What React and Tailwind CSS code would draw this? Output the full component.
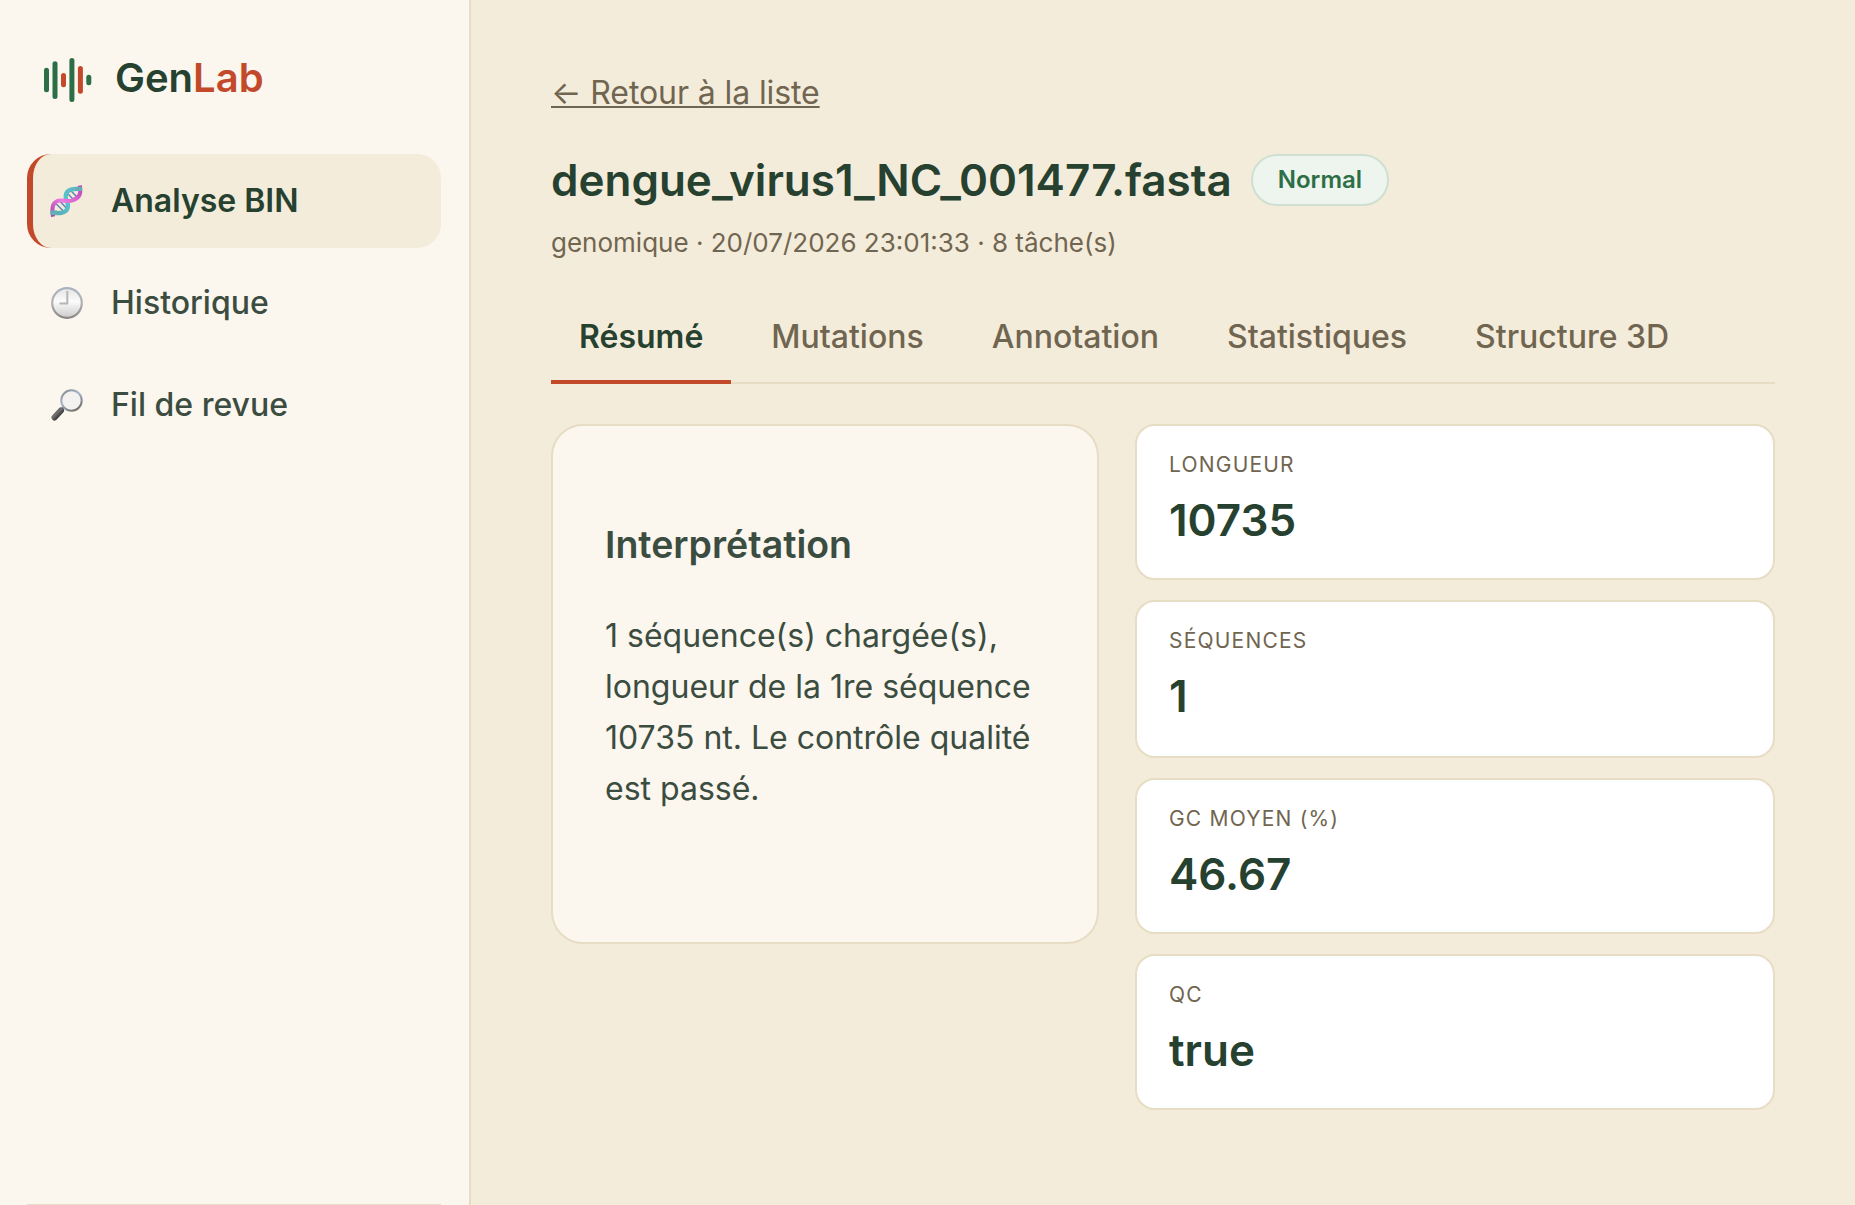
import React, { useState } from 'react';
import clsx from 'clsx';

const BARS = [
  { x: 0, y: 9.7, h: 24.6, color: '#2d6e46' },
  { x: 8.5, y: 3.3, h: 37.7, color: '#2d6e46' },
  { x: 17, y: 15, h: 14.3, color: '#c24a2b' },
  { x: 25.4, y: 0, h: 44, color: '#2d6e46' },
  { x: 33.9, y: 8, h: 27.7, color: '#c24a2b' },
  { x: 42.3, y: 16.7, h: 10.5, color: '#2d6e46' },
];

const TABS = ['Résumé', 'Mutations', 'Annotation', 'Statistiques', 'Structure 3D'];

const STATS = [
  { label: 'Longueur', value: '10735' },
  { label: 'Séquences', value: '1' },
  { label: 'GC moyen (%)', value: '46.67' },
  { label: 'QC', value: 'true' },
];

function Logo() {
  return (
    <svg width="48" height="44" viewBox="0 0 48 44">
      {BARS.map((b) => (
        <rect key={b.x} x={b.x} y={b.y} width="5" height={b.h} rx="2.5" fill={b.color} />
      ))}
    </svg>
  );
}

function DnaIcon() {
  return (
    <svg width="33" height="32" viewBox="0 0 34 32" fill="none" className="-ml-px">
      <defs>
        <linearGradient id="dnaPink" x1="0" y1="32" x2="32" y2="0" gradientUnits="userSpaceOnUse">
          <stop offset="0" stopColor="#a83fa6" />
          <stop offset="0.45" stopColor="#ee7be0" />
          <stop offset="1" stopColor="#b743b8" />
        </linearGradient>
        <linearGradient id="dnaBlue" x1="0" y1="32" x2="32" y2="0" gradientUnits="userSpaceOnUse">
          <stop offset="0" stopColor="#5ea5ad" />
          <stop offset="0.5" stopColor="#54c3cf" />
          <stop offset="1" stopColor="#64b6bd" />
        </linearGradient>
      </defs>
      <path d="M6 18.500l8 8M9.500 15.500l7 7.500M18 8l7.500 8M21.500 5.500l6.500 6.500" stroke="#5f83b8" strokeWidth="1.500" />
      <path d="M1.500 28C9 29 18 29 18.500 21.500C18.800 17 15.700 15 16.200 10.500C17 3 24 3.500 32.500 3.500" stroke="url(#dnaBlue)" strokeWidth="4.400" />
      <path d="M3.200 32C1.500 23 2.500 16.200 10.500 15.500C16 15.200 19 17.500 24 15C31 12.500 32 8 30.800 0" stroke="url(#dnaPink)" strokeWidth="4.200" />
      <path d="M0.500 28h7M26 3.500h7" stroke="#62b0b6" strokeWidth="4.600" />
    </svg>
  );
}

function ClockIcon() {
  return (
    <svg width="32" height="32" viewBox="0 0 32 32" fill="none">
      <defs>
        <linearGradient id="clockFace" x1="16" y1="2" x2="16" y2="30" gradientUnits="userSpaceOnUse">
          <stop offset="0" stopColor="#e6e6e6" />
          <stop offset="0.45" stopColor="#fbfbfb" />
          <stop offset="1" stopColor="#cfcdcc" />
        </linearGradient>
        <linearGradient id="clockRim" x1="16" y1="0" x2="16" y2="32" gradientUnits="userSpaceOnUse">
          <stop offset="0" stopColor="#a9b2bf" />
          <stop offset="0.5" stopColor="#b3b3b5" />
          <stop offset="1" stopColor="#858282" />
        </linearGradient>
      </defs>
      <circle cx="16" cy="16" r="14.800" fill="url(#clockFace)" stroke="url(#clockRim)" strokeWidth="2.200" />
      <path d="M16.300 4V16.500H8.500" stroke="#b8b5b3" strokeWidth="2" />
    </svg>
  );
}

function LoupeIcon() {
  return (
    <svg width="32" height="32" viewBox="0 0 32 32" fill="none">
      <defs>
        <linearGradient id="loupeRim" x1="12" y1="0" x2="26" y2="22" gradientUnits="userSpaceOnUse">
          <stop offset="0" stopColor="#85888d" />
          <stop offset="0.45" stopColor="#a5b6ca" />
          <stop offset="1" stopColor="#6f6b66" />
        </linearGradient>
        <linearGradient id="loupeHandle" x1="3" y1="22" x2="9" y2="28" gradientUnits="userSpaceOnUse">
          <stop offset="0" stopColor="#3c3c3c" />
          <stop offset="0.4" stopColor="#747474" />
          <stop offset="1" stopColor="#2a2a2a" />
        </linearGradient>
      </defs>
      <path d="M10.500 20.500L13.500 17.500" stroke="#8a8680" strokeWidth="2.500" />
      <path d="M3.500 28.500L10 21.500" stroke="url(#loupeHandle)" strokeWidth="6" strokeLinecap="round" />
      <circle cx="20.500" cy="11.500" r="10.200" fill="#f4f2f1" stroke="url(#loupeRim)" strokeWidth="2" />
    </svg>
  );
}

const NAV = [
  { label: 'Analyse BIN', Icon: DnaIcon },
  { label: 'Historique', Icon: ClockIcon },
  { label: 'Fil de revue', Icon: LoupeIcon },
];

function Sidebar() {
  const [page, setPage] = useState('Analyse BIN');

  return (
    <aside className="flex w-[471px] shrink-0 flex-col border-r-2 border-[#e7dcc4] bg-[#fbf6ee] pr-7 pl-[27px]">
      <div className="flex h-[154px] items-center gap-[23px] pt-1.5 pl-[17px]">
        <Logo />
        <span className="-mt-[5px] text-[40px] font-semibold text-[#26412f]">
          Gen<span className="text-[#c24a2b]">Lab</span>
        </span>
      </div>
      <nav className="flex flex-col gap-2">
        {NAV.map(({ label, Icon }) => (
          <button
            key={label}
            onClick={() => setPage(label)}
            className={clsx(
              'flex h-[94px] items-center gap-7 rounded-3xl border-l-[6px] pl-[18px] text-[32px]',
              page === label
                ? 'border-[#c24a2b] bg-[#f4ecda] font-semibold text-[#26412f]'
                : 'border-transparent font-medium text-[#3b4c40]'
            )}
          >
            <Icon />
            {label}
          </button>
        ))}
      </nav>
      <div className="mt-auto h-px bg-[#e7dcc4]" />
    </aside>
  );
}

export default function App() {
  const [tab, setTab] = useState('Résumé');

  return (
    <div className="flex h-screen overflow-hidden bg-[#f4ecda] font-['Inter',sans-serif] text-[#3b4c40]">
      <Sidebar />
      <main className="flex-1 pt-[69px] pr-20 pl-20">
        <a
          href="#"
          className="block w-fit text-[32px] leading-[48px] tracking-[-0.1px] text-[#706550] underline decoration-2 underline-offset-2"
        >
          ← Retour à la liste
        </a>

        <div className="mt-[37px] flex h-[52px] items-center gap-[19px]">
          <h1 className="text-[44px] font-semibold text-[#26412f]">dengue_virus1_NC_001477.fasta</h1>
          <span className="flex h-[52px] items-center rounded-full border-2 border-[#cfe0d2] bg-[#eef5ee] px-[25px] text-[24px] font-semibold text-[#2d6e46]">
            Normal
          </span>
        </div>
        <p className="mt-[17px] text-[26px] leading-[39px] text-[#706550]">
          genomique · 20/07/2026 23:01:33 · 8 tâche(s)
        </p>

        <div className="mt-[30px] flex h-[92px] gap-3 border-b-2 border-[#e7dcc4]">
          {TABS.map((t) => (
            <button
              key={t}
              onClick={() => setTab(t)}
              className={clsx(
                '-mb-0.5 border-b-4 px-7 pt-0.5 text-[32px]',
                tab === t
                  ? 'border-[#c24a2b] font-semibold text-[#26412f]'
                  : 'border-transparent font-medium text-[#706550]'
              )}
            >
              {t}
            </button>
          ))}
        </div>

        <div className="mt-10 grid grid-cols-[548px_640px] items-start gap-9">
          <section className="h-[520px] rounded-[32px] border-2 border-[#e7dcc4] bg-[#fbf6ee] px-[52px] pt-[90px]">
            <h2 className="text-[37.5px] leading-[57px] font-semibold">Interprétation</h2>
            <p className="mt-[36.8px] text-[32px] leading-[51.2px]">
              1 séquence(s) chargée(s), longueur de la 1re séquence 10735 nt. Le contrôle qualité est passé.
            </p>
          </section>

          <div className="flex flex-col gap-5">
            {STATS.map((s) => (
              <div
                key={s.label}
                className="h-[156px] rounded-[20px] border-2 border-[#e7dcc4] bg-white px-8 pt-[23px] nth-2:h-[158px]"
              >
                <div className="text-[21px] leading-8 tracking-[1.2px] text-[#706550] uppercase">{s.label}</div>
                <div className="mt-1.5 text-[44px] leading-[66px] font-semibold text-[#26412f]">{s.value}</div>
              </div>
            ))}
          </div>
        </div>
      </main>
    </div>
  );
}
